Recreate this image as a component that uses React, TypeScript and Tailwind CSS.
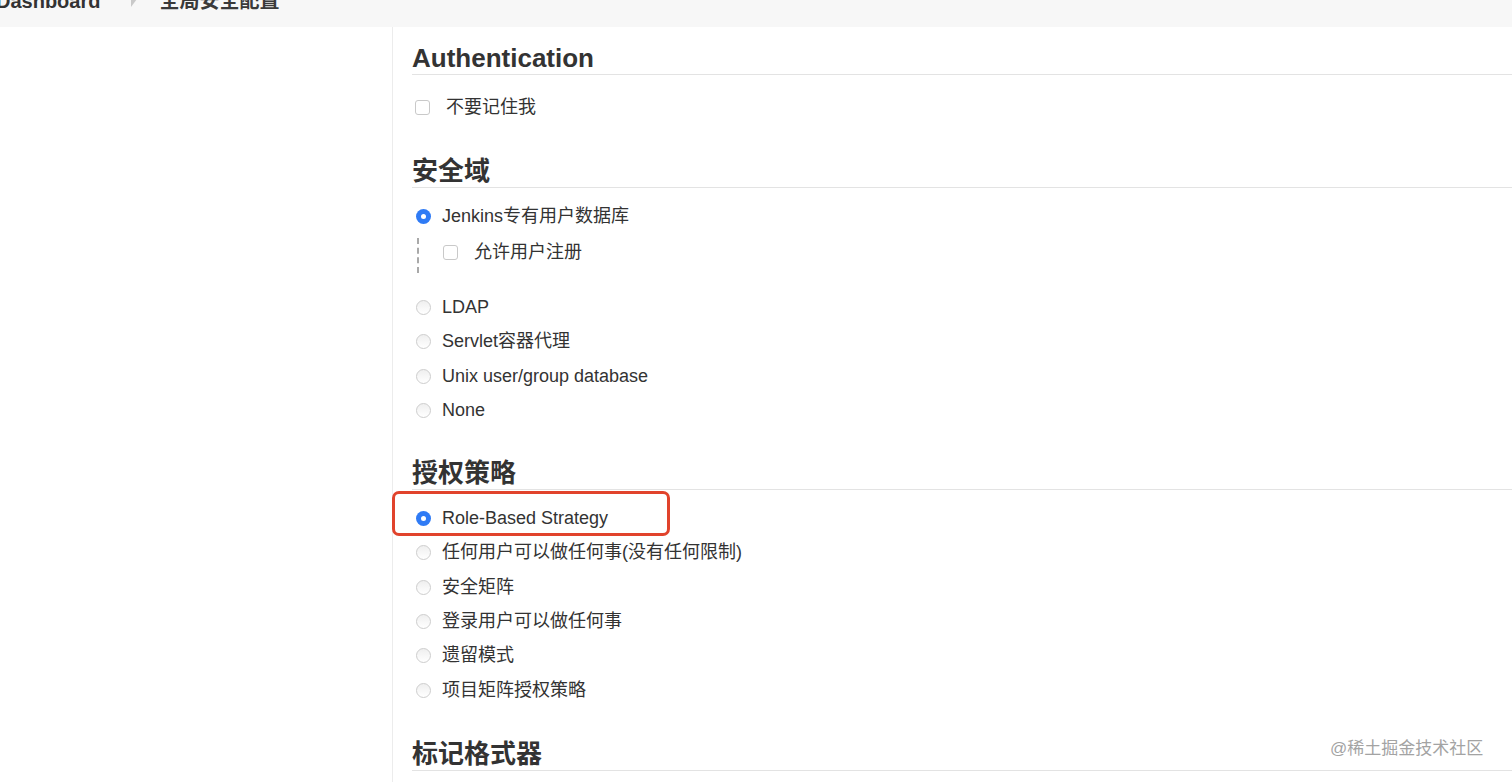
const font = "font-['Liberation_Sans','Noto_Sans_CJK_SC',sans-serif]";

function Heading({ children, className = '' }: { children: string; className?: string }) {
  return (
    <h2 className={`border-b border-[#e3e3e3] text-[26px] leading-[32px] font-bold text-[#333] ${className}`}>
      {children}
    </h2>
  );
}

function Radio({ label, checked = false }: { label: string; checked?: boolean }) {
  return (
    <div className="flex h-[34.3px] items-center">
      {checked ? (
        <span className="ml-[4px] flex h-[15px] w-[15px] shrink-0 items-center justify-center rounded-full bg-[#2f7bf5]">
          <span className="h-[5px] w-[5px] rounded-full bg-white" />
        </span>
      ) : (
        <span className="ml-[4px] h-[15px] w-[15px] shrink-0 rounded-full border border-[#cdcdcd] bg-gradient-to-b from-[#efefef] to-white" />
      )}
      <span className="ml-[11px] text-[18px] text-[#333]">{label}</span>
    </div>
  );
}

function Checkbox({ label, gap = 'ml-[16px]' }: { label: string; gap?: string }) {
  return (
    <div className="flex h-[34px] items-center">
      <span className="ml-[3px] h-[15px] w-[15px] shrink-0 rounded-[3px] border border-[#c9c9c9] bg-white" />
      <span className={`${gap} text-[18px] text-[#333]`}>{label}</span>
    </div>
  );
}

export default function App() {
  return (
    <div className={`relative h-[782px] w-[1512px] overflow-hidden bg-white ${font}`}>
      {/* breadcrumb */}
      <div className="flex h-[27px] items-start overflow-hidden bg-[#f7f7f7]">
        <span className="-ml-[4px] -mt-[9px] text-[20px] leading-[20px] font-bold text-[#333]">Dashboard</span>
        <svg className="ml-[30px] -mt-[1px]" width="8" height="10" viewBox="0 0 8 10">
          <path d="M1 0 L7 0 L1 8 Z" fill="#c9c9c9" />
        </svg>
        <span className="ml-[21px] -mt-[9px] text-[20px] leading-[20px] font-bold text-[#3a3a3a]">全局安全配置</span>
      </div>

      <div className="flex h-[755px]">
        <div className="w-[393px] shrink-0 border-r border-[#ececec]" />
        <div className="flex-1 pl-[19px]">
          <Heading className="mt-[15px]">Authentication</Heading>
          <div className="mt-[15px]">
            <Checkbox label="不要记住我" />
          </div>

          <Heading className="mt-[31px]">安全域</Heading>
          <div className="mt-[11px]">
            <Radio label="Jenkins专有用户数据库" checked />
            <div className="relative h-[57px]">
              <div className="absolute left-[5px] top-[5px] h-[35px] border-l-2 border-dashed border-[#a9a9a9]" />
              <div className="pt-[2px] pl-[28px]">
                <Checkbox label="允许用户注册" />
              </div>
            </div>
            <Radio label="LDAP" />
            <Radio label="Servlet容器代理" />
            <Radio label="Unix user/group database" />
            <Radio label="None" />
          </div>

          <Heading className="mt-[30px]">授权策略</Heading>
          <div className="mt-[11px]">
            <div className="relative">
              <Radio label="Role-Based Strategy" checked />
              <div className="absolute -left-[20px] -top-[10px] h-[45px] w-[278px] rounded-[7px] border-[3px] border-[#e1432c]" />
            </div>
            <Radio label="任何用户可以做任何事(没有任何限制)" />
            <Radio label="安全矩阵" />
            <Radio label="登录用户可以做任何事" />
            <Radio label="遗留模式" />
            <Radio label="项目矩阵授权策略" />
          </div>

          <Heading className="mt-[31px]">标记格式器</Heading>
        </div>
      </div>

      <span className="absolute left-[1330px] top-[737px] text-[17px] leading-[24px] text-[#a3a3a3] [text-shadow:0_0_1px_#fff]">
        @稀土掘金技术社区
      </span>
    </div>
  );
}
